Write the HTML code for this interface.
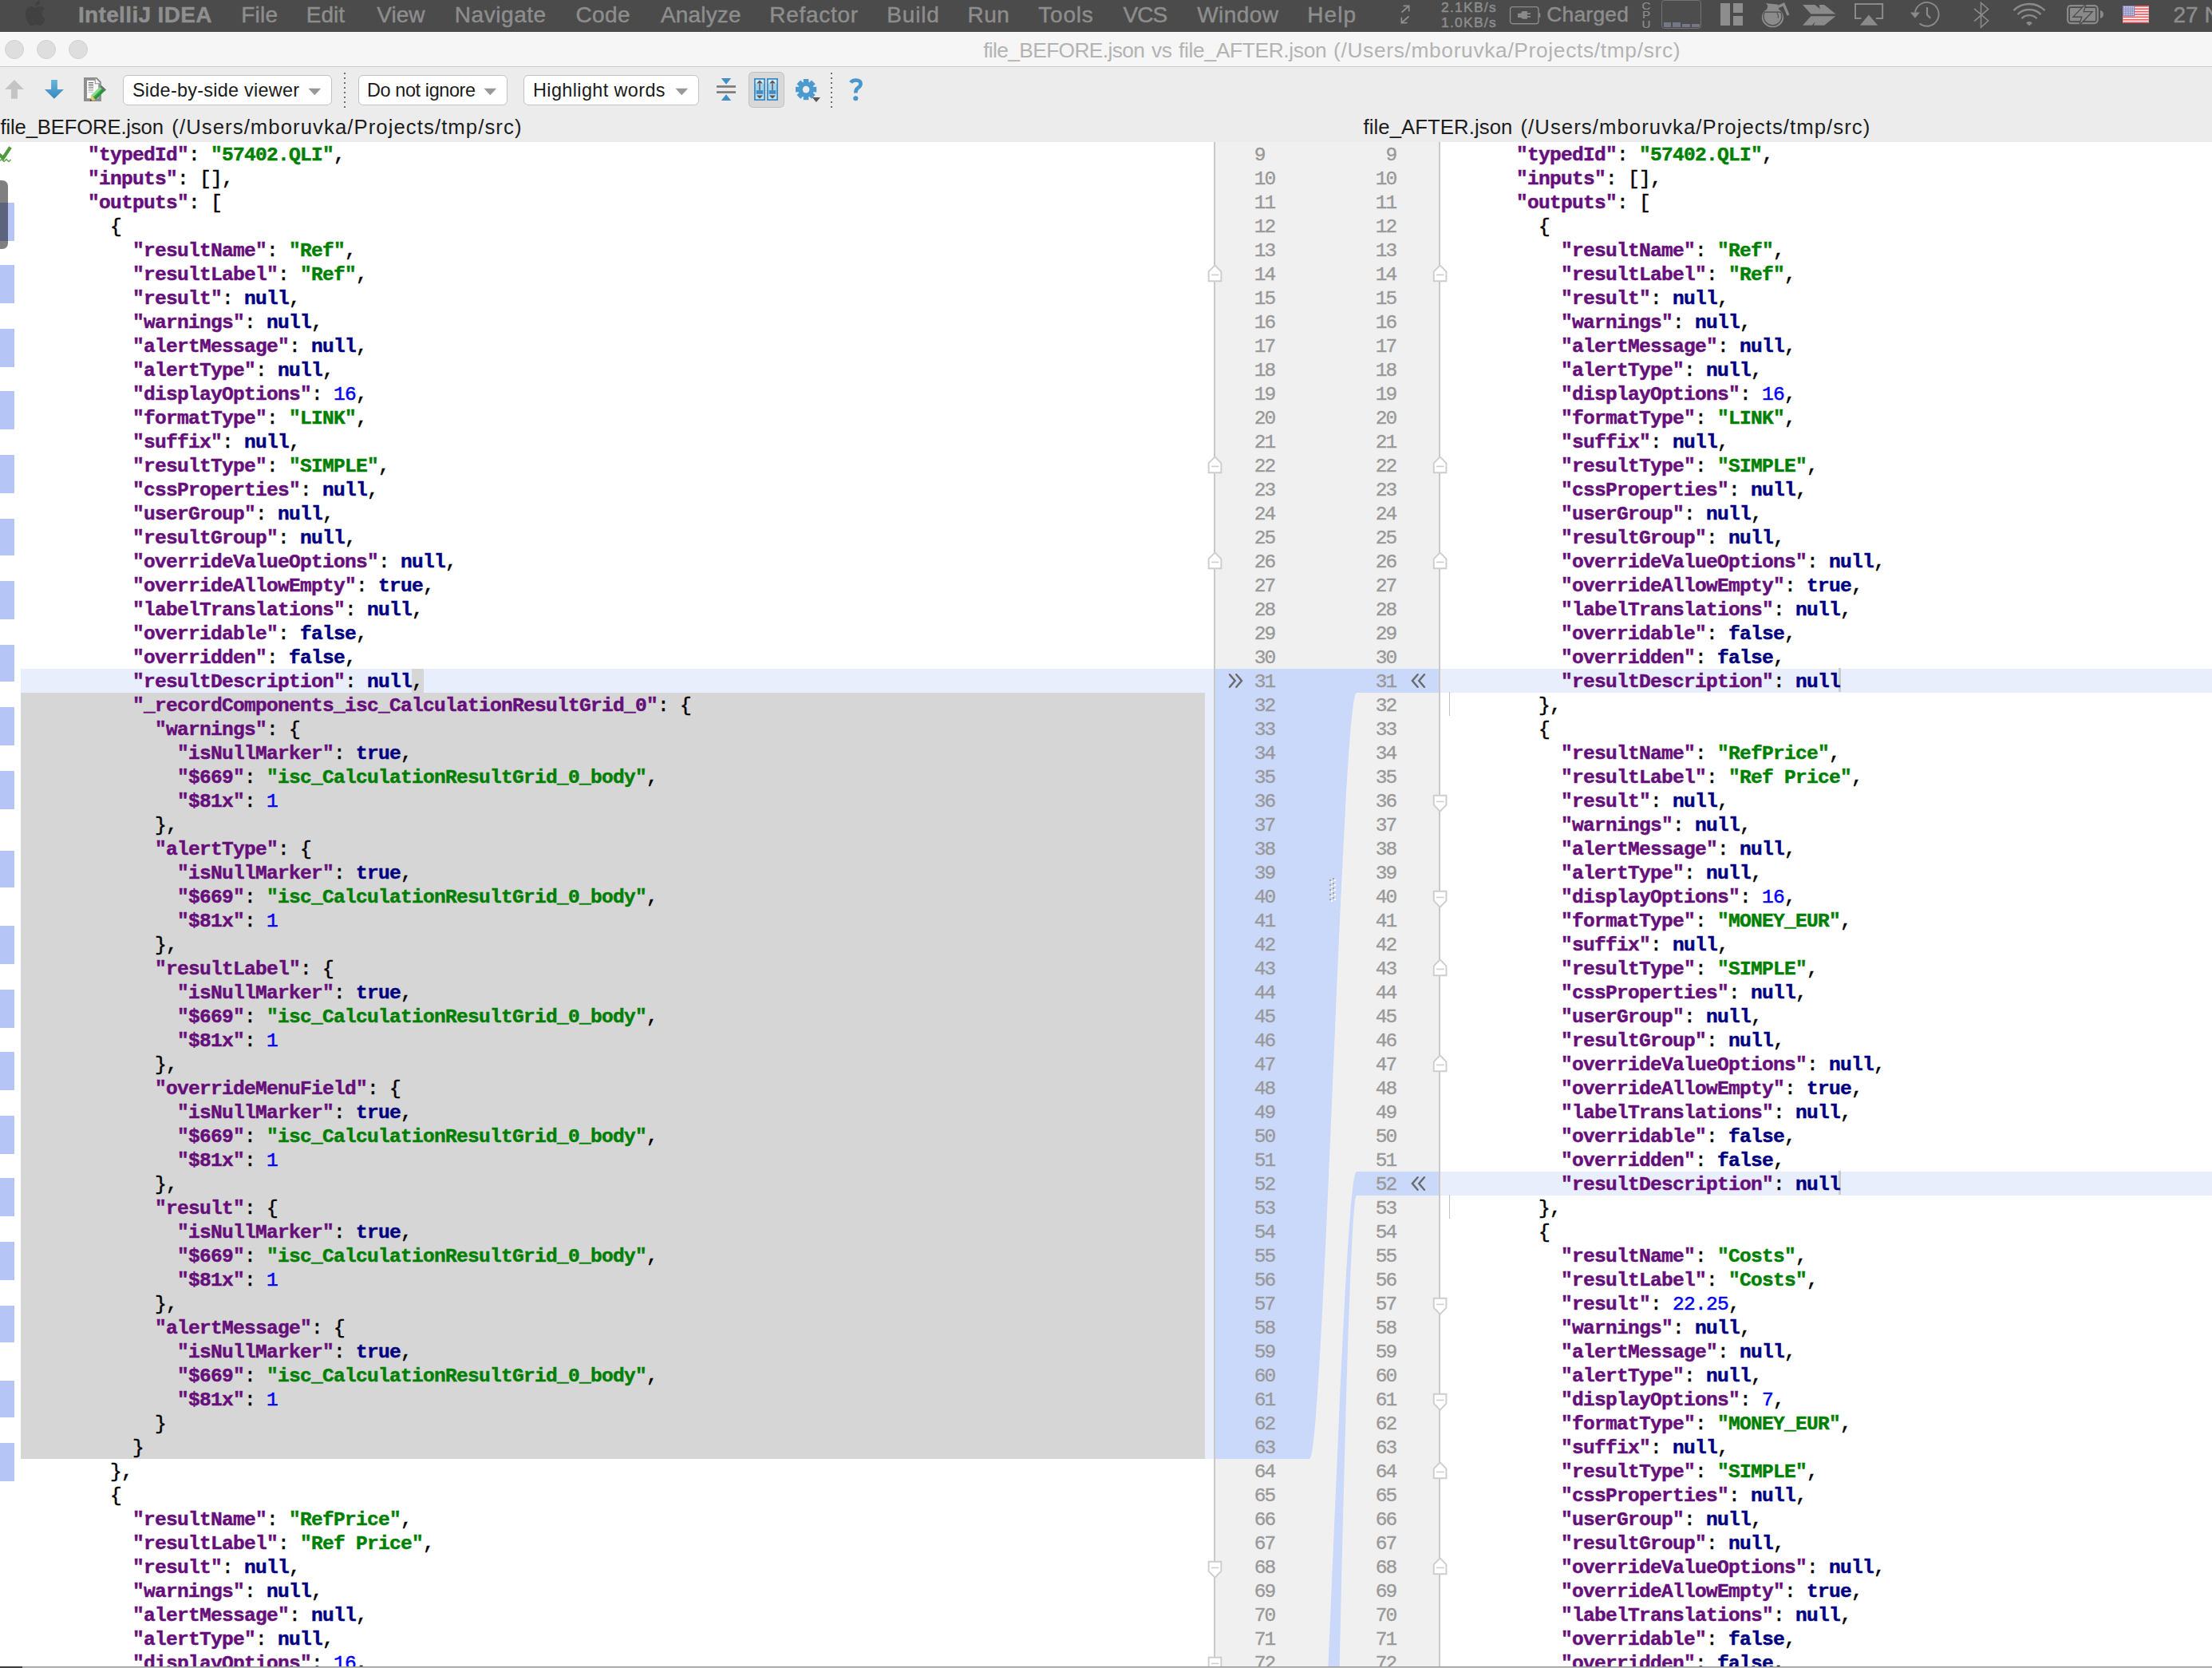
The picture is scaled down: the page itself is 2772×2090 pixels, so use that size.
<!DOCTYPE html>
<html><head><meta charset="utf-8"><title>file_BEFORE.json vs file_AFTER.json</title>
<style>
html,body{margin:0;padding:0;width:2772px;height:2090px;overflow:hidden}
body{background:#fff;position:relative;font-family:"Liberation Sans",sans-serif;}
#root{left:0;top:0;width:2772px;height:2090px;overflow:hidden;background:#fff}
div,pre,svg,span{position:absolute;box-sizing:border-box}
pre{margin:0}
#menubar{left:0;top:0;width:2772px;height:40px;background:#4b4b4b;}
#menubar span{-webkit-text-stroke:.45px;top:0;height:40px;line-height:37.6px;font-size:28px;color:#8d8d8d;white-space:nowrap}
#menubar span.app{font-weight:bold;color:#8f8f8f}
#menubar span.sm{font-size:17.4px;letter-spacing:1.3px;line-height:17px;height:auto}
#titlebar{left:0;top:40px;width:2772px;height:44px;background:#f6f6f6;border-bottom:1.7px solid #cdcdcd;border-top:1px solid #fcfcfc}
#titlebar .tl{margin-top:-1px;width:23.8px;height:23.8px;border-radius:12px;background:#dedede;border:1px solid #d1d1d1;top:10px}
.title{top:-1px;height:43px;line-height:46.5px;font-size:26.3px;color:#b3b3b3;white-space:nowrap}
#toolbar{left:0;top:84px;width:2772px;height:94px;background:#ececec}
.combo{top:10px;height:38px;background:#fff;border:1.2px solid #c3c3c3;border-radius:6px;font-size:23.4px;line-height:36.4px;color:#1a1a1a;white-space:nowrap}
.combo span{top:0}
.combo svg{top:14.7px}
.dots{top:7px;width:2px;height:44px;background-image:linear-gradient(#707070 2px,rgba(0,0,0,0) 2px);background-size:2px 6px}
.flabel{top:56.6px;height:36px;line-height:37px;font-size:25.7px;color:#1c1c1c;white-space:nowrap}
#ed{left:0;top:0;width:2772px;height:2088px;overflow:hidden}
.hl{}
.lav{background:#e9eefc}
.del{background:#d6d6d6}
#gut{background:#f0f0f0}
#poly{left:0;top:0}
.gb{width:2px;background:#c9c9c9}
pre.code,pre.ln{font-family:"Liberation Mono",monospace;font-size:24.5px;letter-spacing:-0.703px;line-height:30px;color:#000;padding-top:1.6px;white-space:pre}
pre.code{-webkit-text-stroke:.5px}
pre.code b{font-weight:bold;-webkit-text-stroke:.5px}
pre.code i{font-style:normal}
.k{color:#660e7a}.s{color:#008000}.w{color:#000080}.n{color:#0000ff}
pre.ln{color:#999;-webkit-text-stroke:.35px;text-align:right;width:56px;letter-spacing:-1.9px}
.mk{left:0;width:17.9px;background:#b5c6f6}
#thumb{left:-8px;top:225.8px;width:18px;height:86px;border-radius:7px;background:rgba(2,2,2,.5)}
#grip{left:1665px;top:1100px;width:10px;height:30px;background-image:radial-gradient(circle at 1.25px 1.25px,#fff 1px,rgba(255,255,255,0) 1.4px),radial-gradient(circle at 1.25px 1.25px,#a9b3d0 1px,rgba(0,0,0,0) 1.4px);background-size:3.3px 3.3px,3.3px 3.3px;background-position:1px 1px,0 0}
#bot{left:0;top:2087.8px;width:2772px;height:3px;background:linear-gradient(#999 0,#999 1.1px,#bcbcbc 1.3px)}
#botd{left:0;top:2087.8px;width:27.8px;height:3px;background:linear-gradient(#2c2c2c 0,#2c2c2c 1.1px,#4a4a4a 1.3px)}
</style></head><body><div id="root">
<div id="menubar">
<svg style="left:26.2px;top:-3.4px" width="37" height="38.4" viewBox="0 0 24 24" preserveAspectRatio="none"><path fill="#414141" d="M18.71 19.5c-.83 1.24-1.71 2.45-3.05 2.47-1.34.03-1.77-.79-3.29-.79-1.53 0-2 .77-3.27.82-1.31.05-2.3-1.32-3.14-2.53C4.25 17 2.94 12.45 4.7 9.39c.87-1.52 2.43-2.48 4.12-2.51 1.28-.02 2.5.87 3.29.87.78 0 2.26-1.07 3.81-.91.65.03 2.47.26 3.64 1.98-.09.06-2.17 1.28-2.15 3.81.03 3.02 2.65 4.03 2.68 4.04-.03.07-.42 1.44-1.38 2.83M13 3.5c.73-.83 1.94-1.46 2.94-1.5.13 1.17-.34 2.35-1.04 3.19-.69.85-1.83 1.51-2.95 1.42-.15-1.15.41-2.35 1.05-3.11z"/></svg>
<span class="app" style="left:97.9px;letter-spacing:.36px">IntelliJ IDEA</span>
<span style="left:302.3px;letter-spacing:.2px">File</span>
<span style="left:383.8px">Edit</span>
<span style="left:472.3px">View</span>
<span style="left:569.8px;letter-spacing:.55px">Navigate</span>
<span style="left:721.5px;letter-spacing:.4px">Code</span>
<span style="left:828.0px;letter-spacing:.15px">Analyze</span>
<span style="left:964.3px;letter-spacing:.7px">Refactor</span>
<span style="left:1111.3px;letter-spacing:.8px">Build</span>
<span style="left:1212.5px;letter-spacing:.5px">Run</span>
<span style="left:1301.3px;letter-spacing:.8px">Tools</span>
<span style="left:1407.5px;letter-spacing:-.9px">VCS</span>
<span style="left:1500.3px;letter-spacing:.4px">Window</span>
<span style="left:1638.3px;letter-spacing:1.1px">Help</span>
<!-- status icons -->
<svg style="left:1754px;top:6px" width="14" height="24" viewBox="0 0 14 24"><path d="M2.5,9.5 L11.5,1.5 M4.5,1.3 H11.7 V8.2 M11.5,14.5 L2.5,22.5 M9.5,22.7 H2.3 V15.8" fill="none" stroke="#8e8e8e" stroke-width="1.7"/></svg>
<span class="sm" style="left:1806px;top:1.2px">2.1KB/s</span>
<span class="sm" style="left:1806px;top:19.6px">1.0KB/s</span>
<svg style="left:1891px;top:7px" width="42" height="25" viewBox="0 0 42 25"><rect x="1.55" y="1.65" width="35.4" height="21.1" rx="3" fill="none" stroke="#8a8a8a" stroke-width="1.4"/><path d="M37.4,9.3 H38.2 Q39.3,9.3 39.3,10.4 V13.9 Q39.3,15 38.2,15 H37.4 Z" fill="#8a8a8a"/><path d="M11,9.7 H15.2 V10 Q15.2,7 18.2,7 H22.9 V9.3 H27 V10.9 H22.9 V13 H27 V14.7 H22.9 V16.7 H18.2 Q15.2,16.7 15.2,14.6 V15 H11 Z" fill="#8a8a8a"/></svg>
<span style="left:1938.2px;font-size:26.4px;letter-spacing:.25px;top:0px">Charged</span>
<span class="sm" style="left:2052.6px;top:1.5px;font-size:13.3px;letter-spacing:0;line-height:11.75px;width:20px;text-align:center;transform:scaleX(1.14);-webkit-text-stroke:.2px">C<br>P<br>U</span>
<div style="left:2082px;top:0;width:50px;height:36px;border:1.3px solid #727272;border-radius:3.5px;background:#4d4d4d"></div>
<div style="left:2084.5px;top:28.4px;width:9.6px;height:6px;background:#737887"></div>
<div style="left:2096.3px;top:28.4px;width:9.6px;height:6px;background:#737887"></div>
<div style="left:2108.2px;top:30.2px;width:9.6px;height:4.2px;background:#737887"></div>
<div style="left:2120px;top:30.2px;width:9.6px;height:4.2px;background:#737887"></div>
<div style="left:2156px;top:4px;width:12.05px;height:28px;background:#8d8d8d"></div>
<div style="left:2172px;top:4px;width:12.05px;height:12px;background:#8d8d8d"></div>
<div style="left:2172px;top:20px;width:12.05px;height:12px;background:#8d8d8d"></div>
<!-- coffee pot -->
<svg style="left:2206px;top:2px" width="38" height="34" viewBox="0 0 38 34"><ellipse cx="15.5" cy="20" rx="13.7" ry="12.3" fill="#8b8b8b"/><path d="M7.0,2.1 L22.3,3.8 L23.2,9.5 L22.0,12.0 L9.0,12.0 L8.3,9.6 L9.3,5.2 Z" fill="#8b8b8b"/><path d="M22.6,6.4 L29.2,3.2 L35.0,17.2" fill="none" stroke="#8b8b8b" stroke-width="3.3" stroke-linejoin="miter"/><path d="M5.3,13.2 H25.7 A11.4,11.5 0 1 1 5.3,13.2 Z" fill="none" stroke="#4b4b4b" stroke-width="1.2"/><path d="M20.6,14.4 Q23.4,17.0 22.0,20.6" fill="none" stroke="#4b4b4b" stroke-width="1.1"/></svg>
<!-- feather arrow -->
<svg style="left:2258px;top:5px" width="44" height="28" viewBox="0 0 44 28"><path d="M1.0,1.1 L16.4,1.1 L22.7,6.3 L21.8,1.1 L28.2,1.1 L42.4,12.5 L11.4,12.5 Z M11.4,15.3 L42.4,15.3 L28.2,26.8 L15.0,26.8 L16.6,22.3 L12.8,26.8 L1.0,26.8 Z" fill="#8a8a8a"/></svg>
<!-- airplay -->
<svg style="left:2323px;top:2px" width="39" height="31" viewBox="0 0 39 31"><path d="M9.5,21 H2 V2.9000000000000004 H36.1 V21 H27.8" fill="none" stroke="#8a8a8a" stroke-width="2"/><path d="M18.9,16.5 L30.2,29.8 H7.8 Z" fill="#8a8a8a"/></svg>
<!-- time machine -->
<svg style="left:2392px;top:1px" width="40" height="36" viewBox="0 0 40 36"><path d="M8.0,14.3 A14.9,14.9 0 1 1 13.5,28.6" fill="none" stroke="#8a8a8a" stroke-width="1.9"/><path d="M1.9,14.4 H14.0 L7.9,21.8 Z" fill="#8a8a8a"/><path d="M23,8 V17.6 L27.2,21.8" fill="none" stroke="#8a8a8a" stroke-width="2.2"/></svg>
<!-- bluetooth -->
<svg style="left:2471px;top:1px" width="24" height="36" viewBox="0 0 24 36"><path d="M3,9.8 L20.6,25 L11.5,33.3 V2.4 L20.6,10.4 L3,25.6" fill="none" stroke="#8a8a8a" stroke-width="1.6"/></svg>
<!-- wifi -->
<svg style="left:2520px;top:1px" width="46" height="33" viewBox="0 0 46 33"><path d="M3.48,12.08 A27.6,27.6 0 0 1 42.52,12.08 M8.43,17.03 A20.6,20.6 0 0 1 37.57,17.03 M13.45,22.05 A13.5,13.5 0 0 1 32.55,22.05" fill="none" stroke="#8a8a8a" stroke-width="2.4"/><path d="M23,31.6 L19.04,27.64 A5.6,5.6 0 0 1 26.96,27.64 Z" fill="#8a8a8a"/></svg>
<!-- battery -->
<svg style="left:2588px;top:4px" width="50" height="28" viewBox="0 0 50 28"><rect x="3.1" y="3.1" width="37.6" height="22" rx="4" fill="none" stroke="#8a8a8a" stroke-width="2.2"/><rect x="6" y="6" width="32" height="16.2" rx="1" fill="#8a8a8a"/><path d="M44,9 Q48,10 48,14 Q48,18 44,19 Z" fill="#8a8a8a"/><path d="M25.2,2.3 L11.4,16.6 L21.7,16.6 L18.7,25.8 L32.6,11.2 L22.3,11.2 Z" fill="#8a8a8a" stroke="#4a4a4a" stroke-width="2.6" paint-order="stroke"/></svg>
<!-- flag -->
<svg style="left:2659.9px;top:7px" width="33" height="22.1" viewBox="0 0 32.4 22.1"><rect width="32.4" height="22.1" fill="#fbfbfb"/><g fill="#f15b5e"><rect y="0.00" width="32.4" height="1.72"/><rect y="3.38" width="32.4" height="1.72"/><rect y="6.77" width="32.4" height="1.72"/><rect y="10.15" width="32.4" height="1.72"/><rect y="13.54" width="32.4" height="1.72"/><rect y="16.92" width="32.4" height="1.72"/><rect y="20.31" width="32.4" height="1.72"/></g><rect width="14.9" height="13.4" fill="#7d81be"/><g fill="#f4f4fb"><circle cx="1.90" cy="1.90" r=".78"/><circle cx="4.12" cy="1.90" r=".78"/><circle cx="6.34" cy="1.90" r=".78"/><circle cx="8.56" cy="1.90" r=".78"/><circle cx="10.78" cy="1.90" r=".78"/><circle cx="13.00" cy="1.90" r=".78"/><circle cx="1.90" cy="4.30" r=".78"/><circle cx="4.12" cy="4.30" r=".78"/><circle cx="6.34" cy="4.30" r=".78"/><circle cx="8.56" cy="4.30" r=".78"/><circle cx="10.78" cy="4.30" r=".78"/><circle cx="13.00" cy="4.30" r=".78"/><circle cx="1.90" cy="6.70" r=".78"/><circle cx="4.12" cy="6.70" r=".78"/><circle cx="6.34" cy="6.70" r=".78"/><circle cx="8.56" cy="6.70" r=".78"/><circle cx="10.78" cy="6.70" r=".78"/><circle cx="13.00" cy="6.70" r=".78"/><circle cx="1.90" cy="9.10" r=".78"/><circle cx="4.12" cy="9.10" r=".78"/><circle cx="6.34" cy="9.10" r=".78"/><circle cx="8.56" cy="9.10" r=".78"/><circle cx="10.78" cy="9.10" r=".78"/><circle cx="13.00" cy="9.10" r=".78"/><circle cx="1.90" cy="11.50" r=".78"/><circle cx="4.12" cy="11.50" r=".78"/><circle cx="6.34" cy="11.50" r=".78"/><circle cx="8.56" cy="11.50" r=".78"/><circle cx="10.78" cy="11.50" r=".78"/><circle cx="13.00" cy="11.50" r=".78"/></g></svg>
<span style="left:2723.5px">27 N</span>
</div>
<div id="titlebar">
<div class="tl" style="left:6.1px"></div><div class="tl" style="left:46.1px"></div><div class="tl" style="left:86.1px"></div>
<span class="title" style="left:1232.2px;letter-spacing:-.62px">file_BEFORE.json</span><span class="title" style="left:1443px;letter-spacing:-.3px">vs</span><span class="title" style="left:1477px;letter-spacing:-.31px">file_AFTER.json</span><span class="title" style="left:1671px;letter-spacing:.68px">(/Users/mboruvka/Projects/tmp/src)</span>
</div>
<div id="toolbar">
<!-- up arrow -->
<svg style="left:5px;top:15px" width="26" height="26" viewBox="0 0 26 26"><path d="M13,1.1 L24.8,12.9 H17 V24.8 H9 V12.9 H1.1 Z" fill="#c4c4c4"/></svg>
<!-- down arrow -->
<svg style="left:55px;top:15px" width="26" height="26" viewBox="0 0 26 26"><defs><linearGradient id="gd" x1="0" y1="0" x2="0" y2="1"><stop offset="0" stop-color="#6cb5d9"/><stop offset="1" stop-color="#3585bf"/></linearGradient></defs><path d="M9.1,1.1 H16.9 V12.9 H25 L12.9,24.8 L0.9,12.9 H9.1 Z" fill="url(#gd)"/></svg>
<!-- edit source -->
<svg style="left:104px;top:12px" width="30" height="32" viewBox="0 0 30 32"><path d="M1,1 H17.4 L22.9,6.6 V31 H1 Z" fill="#8f8f8f"/><path d="M5,4.7 H14.8 V9.3 H19.3 V27.3 H5 Z" fill="#f8f8f8"/><path d="M15.8,2.3 L21.7,8.2 H15.8 Z" fill="#f4f4f4"/><g stroke="#6c6c6c" stroke-width="1"><path d="M6.9,7.5 H13"/><path d="M6.9,9.5 H13"/><path d="M6.9,11.5 H13" opacity=".9"/><path d="M6.9,13.5 H13" opacity=".8"/><path d="M6.9,15.5 H13" opacity=".65"/><path d="M6.9,17.5 H13" opacity=".5"/><path d="M6.9,19.5 H13" opacity=".35"/></g><path d="M23.2,11.2 L28.9,16.4 L16,29 L10.3,23.8 Z" fill="#3cae4c"/><path d="M21.8,12.5 L24,14.6 L11.8,26.2 L10.3,23.8 Z" fill="#8be08e"/><path d="M25.8,15 L27.6,16.8 L15.2,29 L13.7,27.3 Z" fill="#2c8f3b"/><path d="M23.2,11.2 L28.9,16.4 L27,18.3 L21.3,13.1 Z" fill="#6f6f6f"/><path d="M10.3,23.8 L16,29 L9.2,30.6 Z" fill="#f3c365"/><path d="M9.6,28 L11.6,30 L8.6,30.9 Z" fill="#444"/></svg>
<div class="combo" style="left:154px;width:261.5px"><span style="left:11px;letter-spacing:.27px">Side-by-side viewer</span><svg style="left:231.3px" width="16.6" height="9.9" viewBox="0 0 16 9"><path d="M0.4,0.4 H15.6 L8,8.6 Z" fill="#989898"/></svg></div>
<div class="dots" style="left:431px"></div>
<div class="combo" style="left:448.5px;width:187px"><span style="left:10.5px;letter-spacing:-.37px">Do not ignore</span><svg style="left:156.8px" width="16.6" height="9.9" viewBox="0 0 16 9"><path d="M0.4,0.4 H15.6 L8,8.6 Z" fill="#989898"/></svg></div>
<div class="combo" style="left:656px;width:220px"><span style="left:11px;letter-spacing:.4px">Highlight words</span><svg style="left:189.2px" width="16.6" height="9.9" viewBox="0 0 16 9"><path d="M0.4,0.4 H15.6 L8,8.6 Z" fill="#989898"/></svg></div>
<!-- collapse unchanged -->
<svg style="left:897px;top:13px" width="26" height="30" viewBox="0 0 26 30"><path d="M6.8,1.1 H19.2 L13,8.8 Z" fill="#3f8fc9"/><path d="M6.8,28.9 H19.2 L13,21.3 Z" fill="#3f8fc9"/><rect x="1" y="10.1" width="24" height="2.7" fill="#7c7c7c"/><rect x="1" y="17.2" width="24" height="2.7" fill="#7c7c7c"/></svg>
<!-- sync scroll (pressed) -->
<div style="left:938px;top:5.8px;width:45.2px;height:45.5px;background:#d8d8d8;border:1.4px solid #c0c0c0;border-radius:5.5px"></div>
<svg style="left:945px;top:14px" width="30" height="28" viewBox="0 0 30 28"><g><rect x="0.9" y="0.9" width="12.2" height="26.2" fill="#a6d2ee" stroke="#3d8cc5" stroke-width="1.8"/><rect x="1.9" y="1.9" width="10.2" height="5.2" fill="#d8edf9"/><rect x="1.9" y="20.4" width="10.2" height="5.7" fill="#bfe0f4"/><rect x="6.2" y="6.5" width="1.6" height="9" fill="#666"/><path d="M3,6.6 H11 L7,2.4 Z" fill="#555"/><path d="M3,21.4 H11 L7,25.4 Z" fill="#555"/><rect x="2.8" y="15.2" width="8.4" height="4.6" fill="#3d8cc5"/></g><g transform="translate(16,0)"><rect x="0.9" y="0.9" width="12.2" height="26.2" fill="#a6d2ee" stroke="#3d8cc5" stroke-width="1.8"/><rect x="1.9" y="1.9" width="10.2" height="5.2" fill="#d8edf9"/><rect x="1.9" y="20.4" width="10.2" height="5.7" fill="#bfe0f4"/><rect x="6.2" y="6.5" width="1.6" height="9" fill="#666"/><path d="M3,6.6 H11 L7,2.4 Z" fill="#555"/><path d="M3,21.4 H11 L7,25.4 Z" fill="#555"/><rect x="2.8" y="15.2" width="8.4" height="4.6" fill="#3d8cc5"/></g></svg>
<!-- gear -->
<svg style="left:995px;top:13px" width="34" height="32" viewBox="0 0 34 32"><g transform="translate(15.1,15.1)"><g fill="#4b9bd0"><rect x="-3.3" y="-13.1" width="6.6" height="26.2"/><rect x="-3.3" y="-13.1" width="6.6" height="26.2" transform="rotate(45)"/><rect x="-3.3" y="-13.1" width="6.6" height="26.2" transform="rotate(90)"/><rect x="-3.3" y="-13.1" width="6.6" height="26.2" transform="rotate(135)"/><circle r="9.6"/></g><circle r="4.3" fill="#ececec"/></g><path d="M22.9,25.1 H33 L27.9,31 Z" fill="#555"/></svg>
<div class="dots" style="left:1041px"></div>
<!-- help -->
<svg style="left:1062px;top:12px" width="22" height="32" viewBox="0 0 22 32"><path d="M4.2,7.5 Q6,4.5 10.5,4.5 Q16.6,4.5 16.6,9 Q16.6,12 12.6,14.6 Q10.3,16.2 10.3,20.5" fill="none" stroke="#4797cd" stroke-width="4.6"/><circle cx="10.3" cy="27.3" r="3" fill="#4797cd"/></svg>
<span class="flabel" id="fl1" style="left:0.5px;letter-spacing:-.17px">file_BEFORE.json</span><span class="flabel" id="fl2" style="left:215.3px;letter-spacing:1.08px">(/Users/mboruvka/Projects/tmp/src)</span>
<span class="flabel" id="fr1" style="left:1708.4px;letter-spacing:.1px">file_AFTER.json</span><span class="flabel" id="fr2" style="left:1905.5px;letter-spacing:1.07px">(/Users/mboruvka/Projects/tmp/src)</span>
</div>
<div id="ed">
<div class="hl lav" style="left:26px;top:838px;width:1496px;height:30px"></div>
<div class="hl lav" style="left:1510px;top:868px;width:12px;height:960px"></div>
<div class="hl del" style="left:26px;top:868px;width:1484px;height:960px"></div>
<div class="hl del" style="left:516.0px;top:838px;width:14.5px;height:30px"></div>
<div class="hl lav" style="left:1805px;top:838px;width:967px;height:30px"></div>
<div class="hl" style="background:#cbcbcb;left:2303.5px;top:837px;width:3.4px;height:30px"></div>
<div class="hl" style="background:#c4c4c4;left:1816px;top:867px;width:1px;height:30px"></div>
<div class="hl lav" style="left:1805px;top:1468px;width:967px;height:30px"></div>
<div class="hl" style="background:#cbcbcb;left:2303.5px;top:1467px;width:3.4px;height:30px"></div>
<div class="hl" style="background:#c4c4c4;left:1816px;top:1497px;width:1px;height:30px"></div>
<div id="gut" style="left:1522px;top:178px;width:282px;height:1912px"></div>
<svg id="poly" width="2772" height="2090" viewBox="0 0 2772 2090"><path d="M1523,838 L1641,838 C1658.7,838 1682.3,838 1700,838 L1803,838 L1803,868 L1700,868 C1682.3,868 1658.7,1828 1641,1828 L1523,1828 Z" fill="#cad8fa"/><path d="M1641,2428 C1658.7,2428 1682.3,1468 1700,1468 L1803,1468 L1803,1498 L1700,1498 C1682.3,1498 1658.7,3418 1641,3418 Z" fill="#cad8fa"/></svg>
<div class="gb" style="left:1521px;top:178px;height:1912px"></div>
<div class="gb" style="left:1803px;top:178px;height:1912px"></div>
<pre class="code" style="left:26px;top:178px">      <b class="k">"typedId"</b>: <b class="s">"57402.QLI"</b>,
      <b class="k">"inputs"</b>: [],
      <b class="k">"outputs"</b>: [
        {
          <b class="k">"resultName"</b>: <b class="s">"Ref"</b>,
          <b class="k">"resultLabel"</b>: <b class="s">"Ref"</b>,
          <b class="k">"result"</b>: <b class="w">null</b>,
          <b class="k">"warnings"</b>: <b class="w">null</b>,
          <b class="k">"alertMessage"</b>: <b class="w">null</b>,
          <b class="k">"alertType"</b>: <b class="w">null</b>,
          <b class="k">"displayOptions"</b>: <i class="n">16</i>,
          <b class="k">"formatType"</b>: <b class="s">"LINK"</b>,
          <b class="k">"suffix"</b>: <b class="w">null</b>,
          <b class="k">"resultType"</b>: <b class="s">"SIMPLE"</b>,
          <b class="k">"cssProperties"</b>: <b class="w">null</b>,
          <b class="k">"userGroup"</b>: <b class="w">null</b>,
          <b class="k">"resultGroup"</b>: <b class="w">null</b>,
          <b class="k">"overrideValueOptions"</b>: <b class="w">null</b>,
          <b class="k">"overrideAllowEmpty"</b>: <b class="w">true</b>,
          <b class="k">"labelTranslations"</b>: <b class="w">null</b>,
          <b class="k">"overridable"</b>: <b class="w">false</b>,
          <b class="k">"overridden"</b>: <b class="w">false</b>,
          <b class="k">"resultDescription"</b>: <b class="w">null</b>,
          <b class="k">"_recordComponents_isc_CalculationResultGrid_0"</b>: {
            <b class="k">"warnings"</b>: {
              <b class="k">"isNullMarker"</b>: <b class="w">true</b>,
              <b class="k">"$669"</b>: <b class="s">"isc_CalculationResultGrid_0_body"</b>,
              <b class="k">"$81x"</b>: <i class="n">1</i>
            },
            <b class="k">"alertType"</b>: {
              <b class="k">"isNullMarker"</b>: <b class="w">true</b>,
              <b class="k">"$669"</b>: <b class="s">"isc_CalculationResultGrid_0_body"</b>,
              <b class="k">"$81x"</b>: <i class="n">1</i>
            },
            <b class="k">"resultLabel"</b>: {
              <b class="k">"isNullMarker"</b>: <b class="w">true</b>,
              <b class="k">"$669"</b>: <b class="s">"isc_CalculationResultGrid_0_body"</b>,
              <b class="k">"$81x"</b>: <i class="n">1</i>
            },
            <b class="k">"overrideMenuField"</b>: {
              <b class="k">"isNullMarker"</b>: <b class="w">true</b>,
              <b class="k">"$669"</b>: <b class="s">"isc_CalculationResultGrid_0_body"</b>,
              <b class="k">"$81x"</b>: <i class="n">1</i>
            },
            <b class="k">"result"</b>: {
              <b class="k">"isNullMarker"</b>: <b class="w">true</b>,
              <b class="k">"$669"</b>: <b class="s">"isc_CalculationResultGrid_0_body"</b>,
              <b class="k">"$81x"</b>: <i class="n">1</i>
            },
            <b class="k">"alertMessage"</b>: {
              <b class="k">"isNullMarker"</b>: <b class="w">true</b>,
              <b class="k">"$669"</b>: <b class="s">"isc_CalculationResultGrid_0_body"</b>,
              <b class="k">"$81x"</b>: <i class="n">1</i>
            }
          }
        },
        {
          <b class="k">"resultName"</b>: <b class="s">"RefPrice"</b>,
          <b class="k">"resultLabel"</b>: <b class="s">"Ref Price"</b>,
          <b class="k">"result"</b>: <b class="w">null</b>,
          <b class="k">"warnings"</b>: <b class="w">null</b>,
          <b class="k">"alertMessage"</b>: <b class="w">null</b>,
          <b class="k">"alertType"</b>: <b class="w">null</b>,
          <b class="k">"displayOptions"</b>: <i class="n">16</i>,</pre>
<pre class="code" style="left:1816px;top:178px">      <b class="k">"typedId"</b>: <b class="s">"57402.QLI"</b>,
      <b class="k">"inputs"</b>: [],
      <b class="k">"outputs"</b>: [
        {
          <b class="k">"resultName"</b>: <b class="s">"Ref"</b>,
          <b class="k">"resultLabel"</b>: <b class="s">"Ref"</b>,
          <b class="k">"result"</b>: <b class="w">null</b>,
          <b class="k">"warnings"</b>: <b class="w">null</b>,
          <b class="k">"alertMessage"</b>: <b class="w">null</b>,
          <b class="k">"alertType"</b>: <b class="w">null</b>,
          <b class="k">"displayOptions"</b>: <i class="n">16</i>,
          <b class="k">"formatType"</b>: <b class="s">"LINK"</b>,
          <b class="k">"suffix"</b>: <b class="w">null</b>,
          <b class="k">"resultType"</b>: <b class="s">"SIMPLE"</b>,
          <b class="k">"cssProperties"</b>: <b class="w">null</b>,
          <b class="k">"userGroup"</b>: <b class="w">null</b>,
          <b class="k">"resultGroup"</b>: <b class="w">null</b>,
          <b class="k">"overrideValueOptions"</b>: <b class="w">null</b>,
          <b class="k">"overrideAllowEmpty"</b>: <b class="w">true</b>,
          <b class="k">"labelTranslations"</b>: <b class="w">null</b>,
          <b class="k">"overridable"</b>: <b class="w">false</b>,
          <b class="k">"overridden"</b>: <b class="w">false</b>,
          <b class="k">"resultDescription"</b>: <b class="w">null</b>
        },
        {
          <b class="k">"resultName"</b>: <b class="s">"RefPrice"</b>,
          <b class="k">"resultLabel"</b>: <b class="s">"Ref Price"</b>,
          <b class="k">"result"</b>: <b class="w">null</b>,
          <b class="k">"warnings"</b>: <b class="w">null</b>,
          <b class="k">"alertMessage"</b>: <b class="w">null</b>,
          <b class="k">"alertType"</b>: <b class="w">null</b>,
          <b class="k">"displayOptions"</b>: <i class="n">16</i>,
          <b class="k">"formatType"</b>: <b class="s">"MONEY_EUR"</b>,
          <b class="k">"suffix"</b>: <b class="w">null</b>,
          <b class="k">"resultType"</b>: <b class="s">"SIMPLE"</b>,
          <b class="k">"cssProperties"</b>: <b class="w">null</b>,
          <b class="k">"userGroup"</b>: <b class="w">null</b>,
          <b class="k">"resultGroup"</b>: <b class="w">null</b>,
          <b class="k">"overrideValueOptions"</b>: <b class="w">null</b>,
          <b class="k">"overrideAllowEmpty"</b>: <b class="w">true</b>,
          <b class="k">"labelTranslations"</b>: <b class="w">null</b>,
          <b class="k">"overridable"</b>: <b class="w">false</b>,
          <b class="k">"overridden"</b>: <b class="w">false</b>,
          <b class="k">"resultDescription"</b>: <b class="w">null</b>
        },
        {
          <b class="k">"resultName"</b>: <b class="s">"Costs"</b>,
          <b class="k">"resultLabel"</b>: <b class="s">"Costs"</b>,
          <b class="k">"result"</b>: <i class="n">22.25</i>,
          <b class="k">"warnings"</b>: <b class="w">null</b>,
          <b class="k">"alertMessage"</b>: <b class="w">null</b>,
          <b class="k">"alertType"</b>: <b class="w">null</b>,
          <b class="k">"displayOptions"</b>: <i class="n">7</i>,
          <b class="k">"formatType"</b>: <b class="s">"MONEY_EUR"</b>,
          <b class="k">"suffix"</b>: <b class="w">null</b>,
          <b class="k">"resultType"</b>: <b class="s">"SIMPLE"</b>,
          <b class="k">"cssProperties"</b>: <b class="w">null</b>,
          <b class="k">"userGroup"</b>: <b class="w">null</b>,
          <b class="k">"resultGroup"</b>: <b class="w">null</b>,
          <b class="k">"overrideValueOptions"</b>: <b class="w">null</b>,
          <b class="k">"overrideAllowEmpty"</b>: <b class="w">true</b>,
          <b class="k">"labelTranslations"</b>: <b class="w">null</b>,
          <b class="k">"overridable"</b>: <b class="w">false</b>,
          <b class="k">"overridden"</b>: <b class="w">false</b>,</pre>
<pre class="ln" style="left:1571.7px;top:178px;text-align:left">9
10
11
12
13
14
15
16
17
18
19
20
21
22
23
24
25
26
27
28
29
30
31
32
33
34
35
36
37
38
39
40
41
42
43
44
45
46
47
48
49
50
51
52
53
54
55
56
57
58
59
60
61
62
63
64
65
66
67
68
69
70
71
72</pre>
<pre class="ln" style="left:1693.4px;top:178px">9
10
11
12
13
14
15
16
17
18
19
20
21
22
23
24
25
26
27
28
29
30
31
32
33
34
35
36
37
38
39
40
41
42
43
44
45
46
47
48
49
50
51
52
53
54
55
56
57
58
59
60
61
62
63
64
65
66
67
68
69
70
71
72</pre>
<svg class="fm" style="left:1512px;top:328px" width="21" height="32" viewBox="0 0 21 32"><g transform="translate(0.80,0)"><path d="M1.85,24.25 L1.85,12.3 L9.7,4.4 L17.55,12.3 L17.55,24.25 Z" fill="#fff" stroke="#cdcdcd" stroke-width="1.9" stroke-linejoin="miter"/><path d="M5.2,16.4 H14.6" stroke="#cdcdcd" stroke-width="1.6"/></g></svg>
<svg class="fm" style="left:1512px;top:568px" width="21" height="32" viewBox="0 0 21 32"><g transform="translate(0.80,0)"><path d="M1.85,24.25 L1.85,12.3 L9.7,4.4 L17.55,12.3 L17.55,24.25 Z" fill="#fff" stroke="#cdcdcd" stroke-width="1.9" stroke-linejoin="miter"/><path d="M5.2,16.4 H14.6" stroke="#cdcdcd" stroke-width="1.6"/></g></svg>
<svg class="fm" style="left:1512px;top:688px" width="21" height="32" viewBox="0 0 21 32"><g transform="translate(0.80,0)"><path d="M1.85,24.25 L1.85,12.3 L9.7,4.4 L17.55,12.3 L17.55,24.25 Z" fill="#fff" stroke="#cdcdcd" stroke-width="1.9" stroke-linejoin="miter"/><path d="M5.2,16.4 H14.6" stroke="#cdcdcd" stroke-width="1.6"/></g></svg>
<svg class="fm" style="left:1512px;top:1948px" width="21" height="32" viewBox="0 0 21 32"><g transform="translate(0.80,0)"><path d="M1.85,8.75 L17.55,8.75 L17.55,20.7 L9.7,28.6 L1.85,20.7 Z" fill="#fff" stroke="#cdcdcd" stroke-width="1.9" stroke-linejoin="miter"/><path d="M5.2,16.4 H14.6" stroke="#cdcdcd" stroke-width="1.6"/></g></svg>
<svg class="fm" style="left:1512px;top:2068px" width="21" height="32" viewBox="0 0 21 32"><g transform="translate(0.80,0)"><path d="M1.85,8.75 L17.55,8.75 L17.55,20.7 L9.7,28.6 L1.85,20.7 Z" fill="#fff" stroke="#cdcdcd" stroke-width="1.9" stroke-linejoin="miter"/><path d="M5.2,16.4 H14.6" stroke="#cdcdcd" stroke-width="1.6"/></g></svg>
<svg class="fm" style="left:1794px;top:328px" width="21" height="32" viewBox="0 0 21 32"><g transform="translate(0.90,0)"><path d="M1.85,24.25 L1.85,12.3 L9.7,4.4 L17.55,12.3 L17.55,24.25 Z" fill="#fff" stroke="#cdcdcd" stroke-width="1.9" stroke-linejoin="miter"/><path d="M5.2,16.4 H14.6" stroke="#cdcdcd" stroke-width="1.6"/></g></svg>
<svg class="fm" style="left:1794px;top:568px" width="21" height="32" viewBox="0 0 21 32"><g transform="translate(0.90,0)"><path d="M1.85,24.25 L1.85,12.3 L9.7,4.4 L17.55,12.3 L17.55,24.25 Z" fill="#fff" stroke="#cdcdcd" stroke-width="1.9" stroke-linejoin="miter"/><path d="M5.2,16.4 H14.6" stroke="#cdcdcd" stroke-width="1.6"/></g></svg>
<svg class="fm" style="left:1794px;top:688px" width="21" height="32" viewBox="0 0 21 32"><g transform="translate(0.90,0)"><path d="M1.85,24.25 L1.85,12.3 L9.7,4.4 L17.55,12.3 L17.55,24.25 Z" fill="#fff" stroke="#cdcdcd" stroke-width="1.9" stroke-linejoin="miter"/><path d="M5.2,16.4 H14.6" stroke="#cdcdcd" stroke-width="1.6"/></g></svg>
<svg class="fm" style="left:1794px;top:988px" width="21" height="32" viewBox="0 0 21 32"><g transform="translate(0.90,0)"><path d="M1.85,8.75 L17.55,8.75 L17.55,20.7 L9.7,28.6 L1.85,20.7 Z" fill="#fff" stroke="#cdcdcd" stroke-width="1.9" stroke-linejoin="miter"/><path d="M5.2,16.4 H14.6" stroke="#cdcdcd" stroke-width="1.6"/></g></svg>
<svg class="fm" style="left:1794px;top:1108px" width="21" height="32" viewBox="0 0 21 32"><g transform="translate(0.90,0)"><path d="M1.85,8.75 L17.55,8.75 L17.55,20.7 L9.7,28.6 L1.85,20.7 Z" fill="#fff" stroke="#cdcdcd" stroke-width="1.9" stroke-linejoin="miter"/><path d="M5.2,16.4 H14.6" stroke="#cdcdcd" stroke-width="1.6"/></g></svg>
<svg class="fm" style="left:1794px;top:1198px" width="21" height="32" viewBox="0 0 21 32"><g transform="translate(0.90,0)"><path d="M1.85,24.25 L1.85,12.3 L9.7,4.4 L17.55,12.3 L17.55,24.25 Z" fill="#fff" stroke="#cdcdcd" stroke-width="1.9" stroke-linejoin="miter"/><path d="M5.2,16.4 H14.6" stroke="#cdcdcd" stroke-width="1.6"/></g></svg>
<svg class="fm" style="left:1794px;top:1318px" width="21" height="32" viewBox="0 0 21 32"><g transform="translate(0.90,0)"><path d="M1.85,24.25 L1.85,12.3 L9.7,4.4 L17.55,12.3 L17.55,24.25 Z" fill="#fff" stroke="#cdcdcd" stroke-width="1.9" stroke-linejoin="miter"/><path d="M5.2,16.4 H14.6" stroke="#cdcdcd" stroke-width="1.6"/></g></svg>
<svg class="fm" style="left:1794px;top:1618px" width="21" height="32" viewBox="0 0 21 32"><g transform="translate(0.90,0)"><path d="M1.85,8.75 L17.55,8.75 L17.55,20.7 L9.7,28.6 L1.85,20.7 Z" fill="#fff" stroke="#cdcdcd" stroke-width="1.9" stroke-linejoin="miter"/><path d="M5.2,16.4 H14.6" stroke="#cdcdcd" stroke-width="1.6"/></g></svg>
<svg class="fm" style="left:1794px;top:1738px" width="21" height="32" viewBox="0 0 21 32"><g transform="translate(0.90,0)"><path d="M1.85,8.75 L17.55,8.75 L17.55,20.7 L9.7,28.6 L1.85,20.7 Z" fill="#fff" stroke="#cdcdcd" stroke-width="1.9" stroke-linejoin="miter"/><path d="M5.2,16.4 H14.6" stroke="#cdcdcd" stroke-width="1.6"/></g></svg>
<svg class="fm" style="left:1794px;top:1828px" width="21" height="32" viewBox="0 0 21 32"><g transform="translate(0.90,0)"><path d="M1.85,24.25 L1.85,12.3 L9.7,4.4 L17.55,12.3 L17.55,24.25 Z" fill="#fff" stroke="#cdcdcd" stroke-width="1.9" stroke-linejoin="miter"/><path d="M5.2,16.4 H14.6" stroke="#cdcdcd" stroke-width="1.6"/></g></svg>
<svg class="fm" style="left:1794px;top:1948px" width="21" height="32" viewBox="0 0 21 32"><g transform="translate(0.90,0)"><path d="M1.85,24.25 L1.85,12.3 L9.7,4.4 L17.55,12.3 L17.55,24.25 Z" fill="#fff" stroke="#cdcdcd" stroke-width="1.9" stroke-linejoin="miter"/><path d="M5.2,16.4 H14.6" stroke="#cdcdcd" stroke-width="1.6"/></g></svg>
<svg class="fm" style="left:1538px;top:838px" width="24" height="30" viewBox="0 0 24 30"><g transform="translate(0.00,0)"><path d="M3.00,7.300000000000001 L9.70,15.05 L3.00,22.8 M11.30,7.300000000000001 L18.00,15.05 L11.30,22.8" fill="none" stroke="#6b6b6b" stroke-width="2.5" stroke-linecap="round" stroke-linejoin="miter"/></g></svg>
<svg class="fm" style="left:1766px;top:838px" width="24" height="30" viewBox="0 0 24 30"><g transform="translate(0.90,0)"><path d="M9.70,7.300000000000001 L3.00,15.05 L9.70,22.8 M18.00,7.300000000000001 L11.30,15.05 L18.00,22.8" fill="none" stroke="#6b6b6b" stroke-width="2.5" stroke-linecap="round" stroke-linejoin="miter"/></g></svg>
<svg class="fm" style="left:1766px;top:1468px" width="24" height="30" viewBox="0 0 24 30"><g transform="translate(0.90,0)"><path d="M9.70,7.300000000000001 L3.00,15.05 L9.70,22.8 M18.00,7.300000000000001 L11.30,15.05 L18.00,22.8" fill="none" stroke="#6b6b6b" stroke-width="2.5" stroke-linecap="round" stroke-linejoin="miter"/></g></svg>
<svg class="fm" style="left:1666px;top:1100px" width="8" height="30" viewBox="0 0 8 30" shape-rendering="crispEdges"><rect x="4" y="0" width="2" height="2" fill="#a8a49b"/><rect x="6" y="2" width="2" height="2" fill="#fffdf5"/><rect x="0" y="2" width="2" height="2" fill="#a8a49b"/><rect x="2" y="4" width="2" height="2" fill="#fffdf5"/><rect x="4" y="6" width="2" height="2" fill="#a8a49b"/><rect x="6" y="8" width="2" height="2" fill="#fffdf5"/><rect x="0" y="8" width="2" height="2" fill="#a8a49b"/><rect x="2" y="10" width="2" height="2" fill="#fffdf5"/><rect x="4" y="12" width="2" height="2" fill="#a8a49b"/><rect x="6" y="14" width="2" height="2" fill="#fffdf5"/><rect x="0" y="14" width="2" height="2" fill="#a8a49b"/><rect x="2" y="16" width="2" height="2" fill="#fffdf5"/><rect x="4" y="18" width="2" height="2" fill="#a8a49b"/><rect x="6" y="20" width="2" height="2" fill="#fffdf5"/><rect x="0" y="20" width="2" height="2" fill="#a8a49b"/><rect x="2" y="22" width="2" height="2" fill="#fffdf5"/><rect x="4" y="24" width="2" height="2" fill="#a8a49b"/><rect x="6" y="26" width="2" height="2" fill="#fffdf5"/><rect x="0" y="26" width="2" height="2" fill="#a8a49b"/><rect x="2" y="28" width="2" height="2" fill="#fffdf5"/></svg>
<div class="mk" style="top:254.1px;height:47.7px"></div><div class="mk" style="top:332.0px;height:47.8px"></div><div class="mk" style="top:412.1px;height:47.6px"></div><div class="mk" style="top:490.1px;height:47.6px"></div><div class="mk" style="top:570.0px;height:47.8px"></div><div class="mk" style="top:650.0px;height:46.2px"></div><div class="mk" style="top:728.0px;height:47.5px"></div><div class="mk" style="top:808.0px;height:45.6px"></div><div class="mk" style="top:886.1px;height:47.6px"></div><div class="mk" style="top:965.9px;height:47.9px"></div><div class="mk" style="top:1065.9px;height:46.1px"></div><div class="mk" style="top:1159.8px;height:48.1px"></div><div class="mk" style="top:1239.9px;height:47.8px"></div><div class="mk" style="top:1317.9px;height:47.9px"></div><div class="mk" style="top:1398.0px;height:47.9px"></div><div class="mk" style="top:1476.1px;height:47.8px"></div><div class="mk" style="top:1556.1px;height:47.6px"></div><div class="mk" style="top:1635.9px;height:45.9px"></div><div class="mk" style="top:1730.1px;height:45.9px"></div><div class="mk" style="top:1807.9px;height:47.9px"></div>
<div id="thumb"></div>
<svg class="fm" style="left:0;top:181px" width="16" height="26" viewBox="0 0 16 26"><path d="M-1,12.5 L4,17 L13,3.5" fill="none" stroke="#4f9a3c" stroke-width="4.2"/><path d="M-1,21 L2,18.5 L5,21.5 L8,18.5 L11,21.5 L13.5,19" fill="none" stroke="#62a84f" stroke-width="1.5"/></svg>
</div>
<div id="bot"></div><div id="botd"></div>
</div></body></html>
